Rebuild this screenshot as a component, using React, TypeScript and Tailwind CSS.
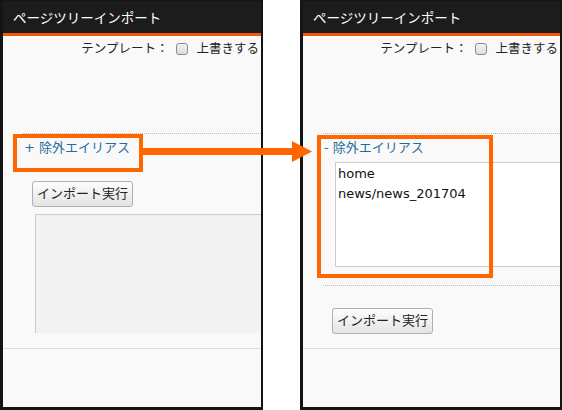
import React from 'react';

const jp = { fontFamily: '"DejaVu Sans", "Noto Sans CJK JP", sans-serif' };

export default function App() {
  return (
    <div className="relative flex h-[410px] w-[562px] overflow-hidden bg-white" style={jp}>
      <Panel />
      <div className="w-[37px] shrink-0" />
      <Panel expanded />

      {/* annotations */}
      <div className="absolute left-[13px] top-[134px] h-[38px] w-[130px] border-4 border-[#ff6600]" />
      <div className="absolute left-[317px] top-[135px] h-[143px] w-[176px] border-4 border-[#ff6600]" />
      <svg className="absolute left-[143px] top-[140px]" width="170" height="24" viewBox="0 0 170 24">
        <rect x="0" y="8" width="150" height="7" fill="#ff6600" />
        <polygon points="149,1 169,11.5 149,22" fill="#ff6600" />
      </svg>
    </div>
  );
}

function Panel({ expanded = false }: { expanded?: boolean }) {
  return (
    <div className={`flex h-[410px] shrink-0 flex-col overflow-hidden border-x-[3px] border-b-[3px] border-t border-[#141414] border-r-2 ${expanded ? 'w-[262px]' : 'w-[263px]'}`}>
      <div className="flex h-[32px] shrink-0 items-center bg-[#1c1c1c] pl-[10px] text-[13.5px] text-white" style={{ fontFamily: '"Noto Sans CJK JP", sans-serif' }}>
        ページツリーインポート
      </div>
      <div className="h-[3px] shrink-0 bg-[#f0560c]" />
      <div className="flex flex-1 flex-col bg-[#f9f9f9] text-[#333]">
        <div className="mt-[4px] flex h-[18px] items-center justify-end whitespace-nowrap pr-[2px] text-[12.5px] text-[#222]">
          <span>テンプレート：</span>
          <span className="mx-[8px] inline-block h-[12px] w-[12px] rounded-[3px] border border-[#8a8a8a] bg-gradient-to-b from-[#f4f4f4] to-[#dcdcdc]" />
          <span>上書きする</span>
        </div>

        <div className="ml-[20px] mt-[75px] border-t border-dotted border-[#bbb]" />
        <div className="ml-[21px] mt-[4px] h-[20px] whitespace-nowrap text-[13px] leading-[20px] text-[#1f6d9e]">
          {expanded ? '-' : '+'} 除外エイリアス
        </div>

        {expanded ? (
          <>
            <div className="ml-[32px] mt-[4px] h-[105px] w-[260px] shrink-0 border border-[#ccc] bg-white pl-[2px] pt-[1px] text-[13px] leading-[20px] text-[#111]">
              <div>home</div>
              <div>news/news_201704</div>
            </div>
            <div className="ml-[20px] mt-[18px] border-t border-dotted border-[#bbb]" />
            <ImportButton className="mt-[22px]" />
            <div className="mt-[14px] border-t border-[#ddd]" />
          </>
        ) : (
          <>
            <ImportButton className="mt-[23px]" />
            <div className="ml-[32px] mt-[7px] h-[119px] w-[260px] shrink-0 border-l border-t border-[#ccc] bg-[#f2f2f2]" />
            <div className="mt-[15px] border-t border-[#ddd]" />
          </>
        )}
      </div>
    </div>
  );
}

function ImportButton({ className = '' }: { className?: string }) {
  return (
    <div className={`ml-[29px] flex h-[26px] w-[101px] shrink-0 items-center justify-center rounded-[3px] border border-[#b0b0b0] bg-gradient-to-b from-[#fdfdfd] to-[#e4e4e4] text-[13px] text-[#222] ${className}`}>
      インポート実行
    </div>
  );
}
